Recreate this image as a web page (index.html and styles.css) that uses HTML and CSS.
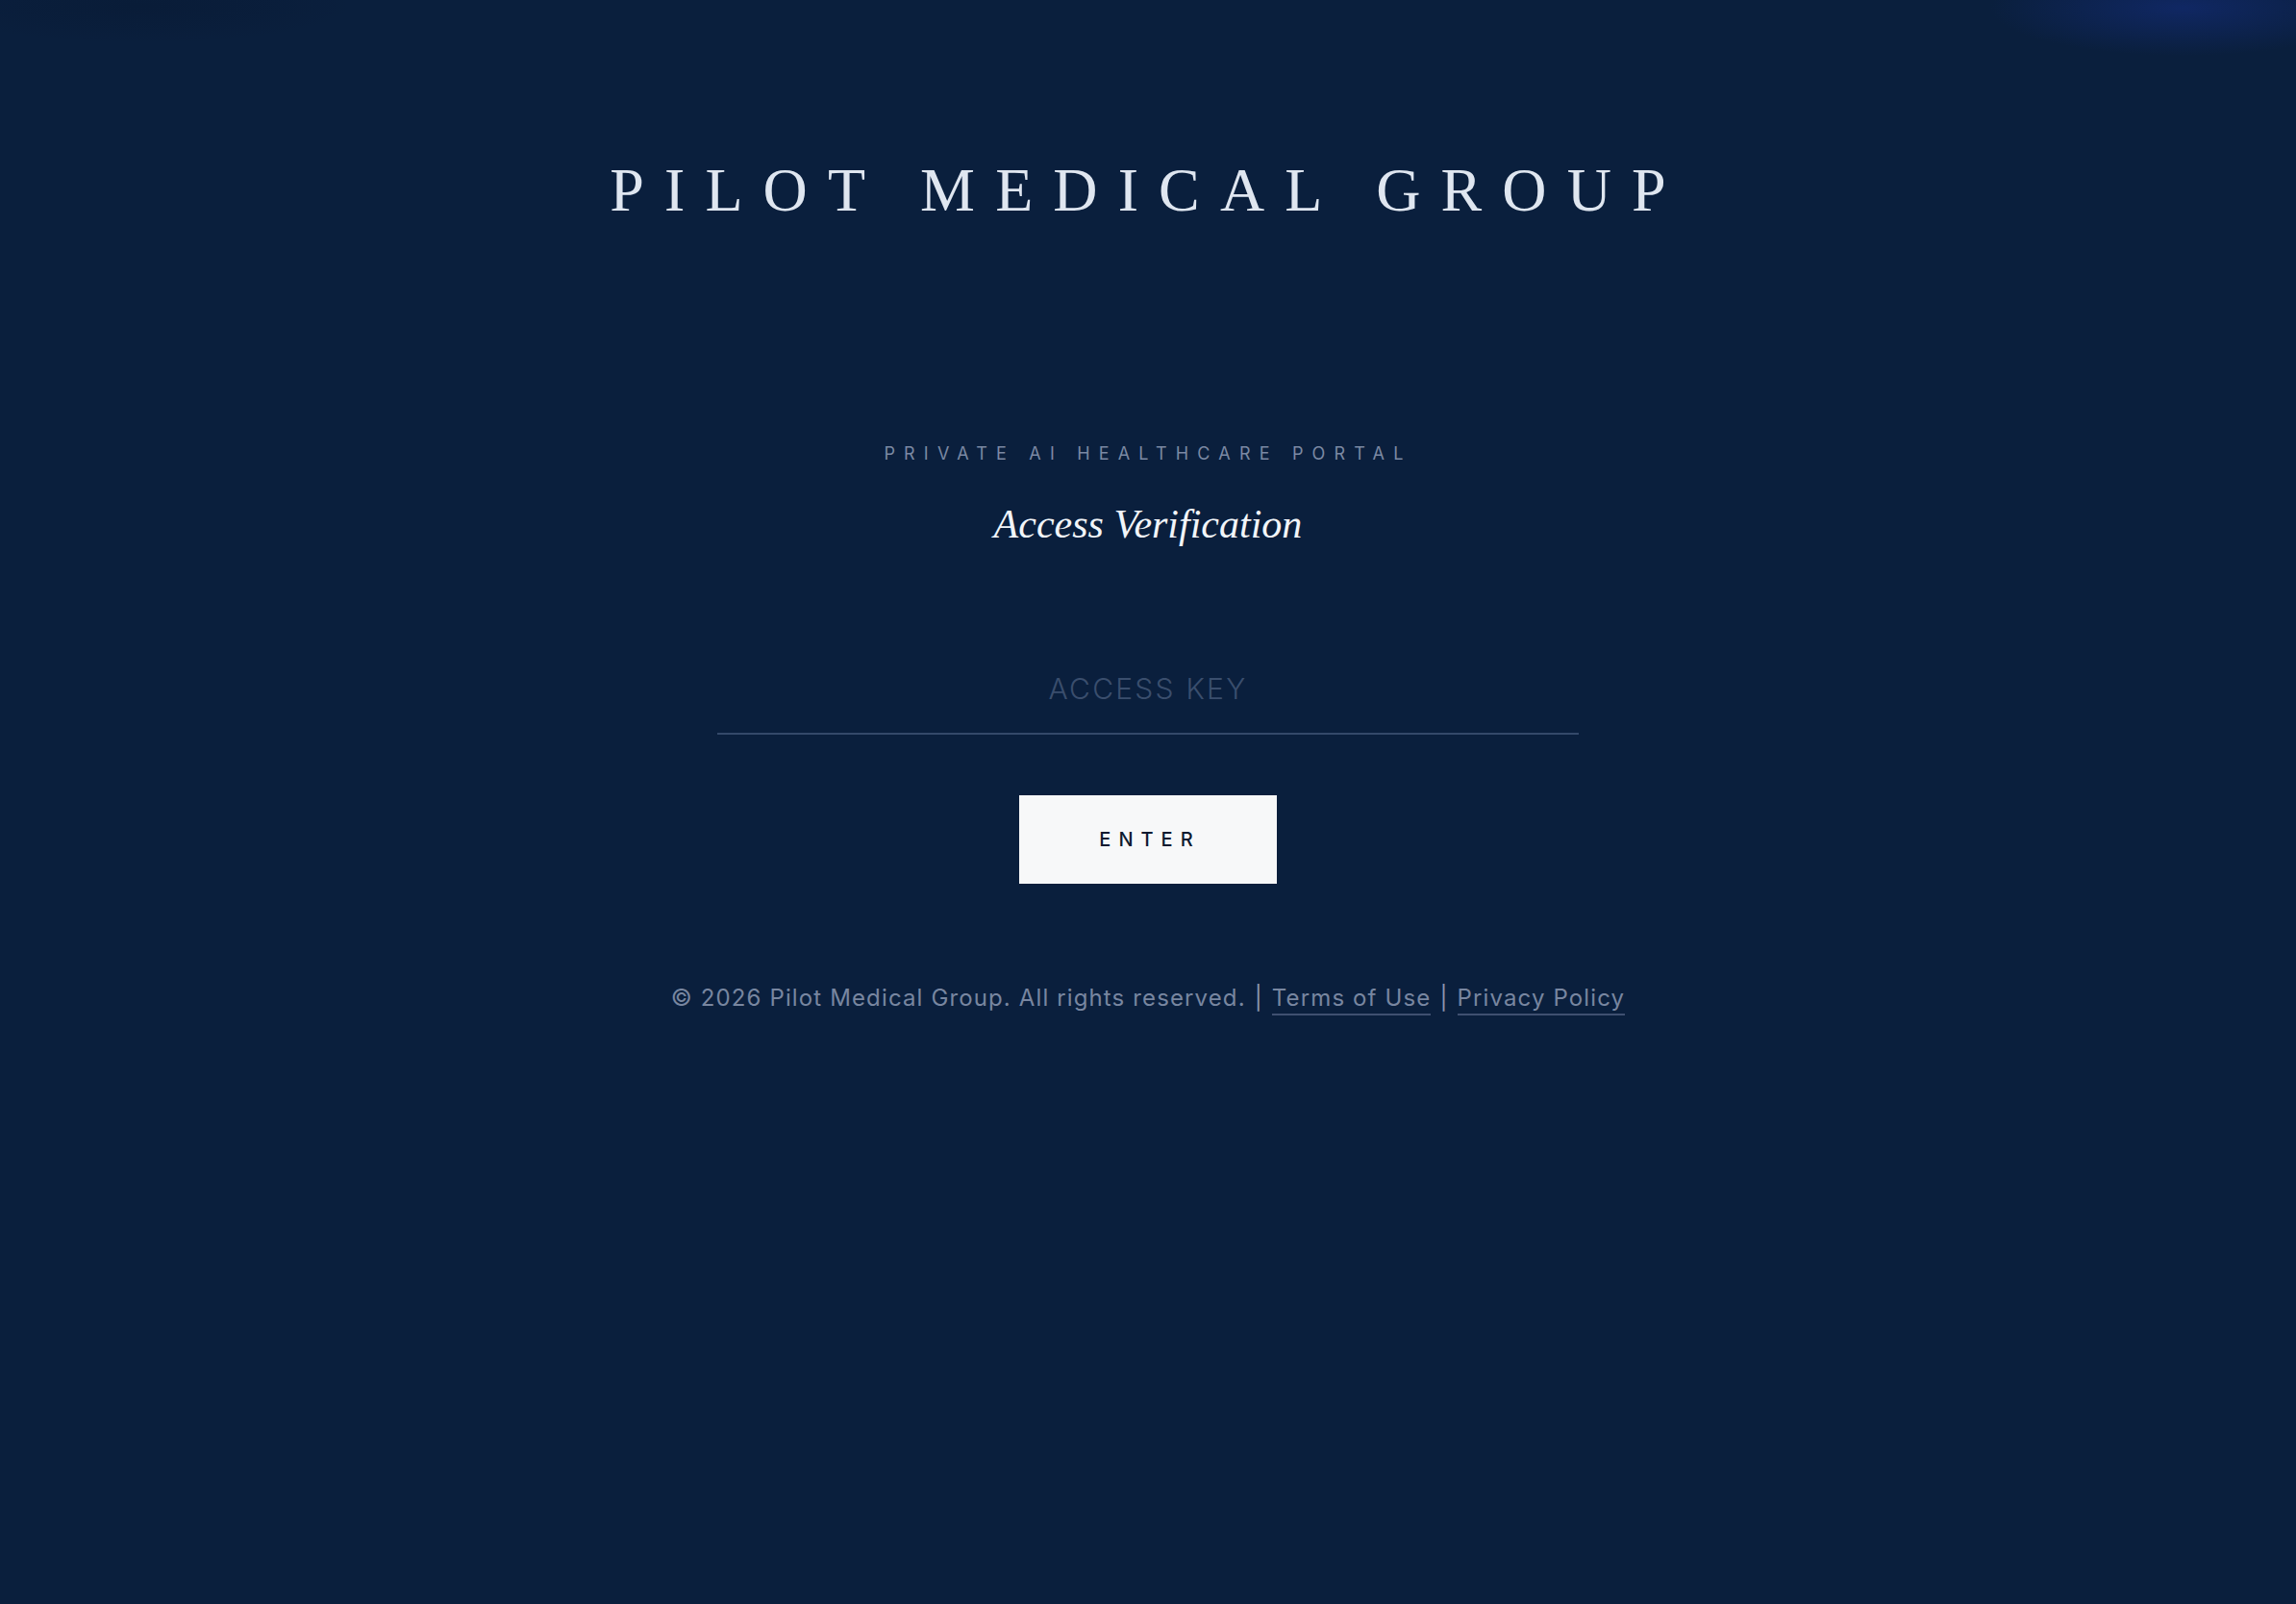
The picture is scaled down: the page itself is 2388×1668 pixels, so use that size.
FILE: index.html
```html
<!DOCTYPE html>
<html lang="en">
<head>
<meta charset="utf-8">
<title>Pilot Medical Group</title>
<link rel="stylesheet" href="styles.css">
</head>
<body>
<div class="page">
  <header class="brand">
    <h1 class="brand-title">PILOT MEDICAL GROUP</h1>
  </header>
  <main class="gate">
    <p class="gate-eyebrow">PRIVATE AI HEALTHCARE PORTAL</p>
    <h2 class="gate-title">Access Verification</h2>
    <form class="gate-form" onsubmit="return false;">
      <input class="gate-input" type="password" placeholder="ACCESS KEY" aria-label="Access key">
      <button class="gate-button" type="submit">ENTER</button>
    </form>
    <footer class="gate-footer">
      <span>© 2026 Pilot Medical Group. All rights reserved.</span>
      <span class="sep">|</span>
      <a class="footer-link" href="#">Terms of Use</a>
      <span class="sep">|</span>
      <a class="footer-link" href="#">Privacy Policy</a>
    </footer>
  </main>
</div>
</body>
</html>
```
FILE: styles.css
```css
html, body {
  margin: 0;
  padding: 0;
  height: 100%;
}
body {
  background-color: #0a1f3d;
  background-image:
    radial-gradient(ellipse 200px 50px at 2270px 8px, rgba(20, 45, 125, 0.6), rgba(20, 45, 125, 0) 100%),
    radial-gradient(ellipse 220px 40px at 150px 6px, rgba(4, 14, 32, 0.18), rgba(4, 14, 32, 0) 100%);
  background-repeat: no-repeat;
  color: #dfe6f0;
  font-family: "Inter", "Liberation Sans", sans-serif;
}
.page {
  min-height: 100%;
  display: flex;
  flex-direction: column;
  align-items: center;
}
.brand {
  padding-top: 166px;
}
.brand-title {
  margin: 0;
  font-family: "Liberation Serif", serif;
  font-weight: 400;
  font-size: 64px;
  line-height: 1;
  letter-spacing: 0.33em;
  color: #dfe6f0;
}
.gate {
  display: flex;
  flex-direction: column;
  align-items: center;
  padding-top: 233px;
}
.gate-eyebrow {
  margin: 0;
  font-size: 18px;
  line-height: 1;
  letter-spacing: 0.51em;
  color: #7b89a3;
}
.gate-title {
  margin: 43px 0 0;
  font-family: "Liberation Serif", serif;
  font-style: italic;
  font-weight: 400;
  font-size: 42px;
  line-height: 1;
  color: #f2f5f9;
}
.gate-form {
  display: flex;
  flex-direction: column;
  align-items: center;
  margin-top: 112px;
}
.gate-input {
  box-sizing: border-box;
  width: 896px;
  height: 86px;
  padding: 20px 0 28px;
  border: 0;
  border-bottom: 2px solid #34496a;
  background: transparent;
  outline: none;
  text-align: center;
  font-family: "Inter", "Liberation Sans", sans-serif;
  font-size: 30px;
  font-weight: 300;
  letter-spacing: 0.075em;
  color: #dfe6f0;
}
.gate-input::placeholder {
  color: #3a4e6d;
}
.gate-button {
  margin-top: 63px;
  width: 268px;
  height: 92px;
  border: 0;
  background: #f7f8f9;
  color: #0d1a30;
  font-family: "Inter", "Liberation Sans", sans-serif;
  font-size: 20px;
  font-weight: 500;
  letter-spacing: 0.4em;
  padding: 0 0 0 0.2em;
  cursor: pointer;
}
.gate-footer {
  margin-top: 105px;
  font-size: 24px;
  line-height: 1.2;
  letter-spacing: 0.047em;
  color: #7886a0;
  display: flex;
  align-items: baseline;
  gap: 9px;
}
.sep {
  color: #8a96ad;
}
.footer-link {
  color: #7886a0;
  text-decoration: none;
  border-bottom: 2px solid #3f5070;
  padding-bottom: 1px;
}
```
